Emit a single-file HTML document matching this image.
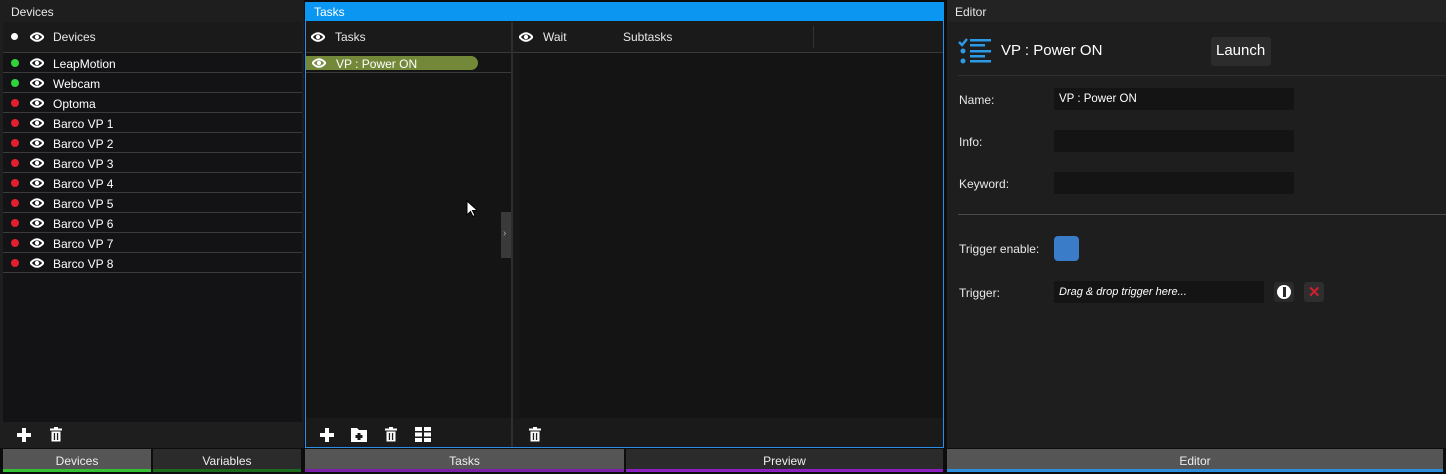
<!DOCTYPE html>
<html><head><meta charset="utf-8"><style>
*{margin:0;padding:0;box-sizing:border-box}
body{width:1446px;height:474px;background:#0d0d0d;font-family:"Liberation Sans",sans-serif;font-size:12px;color:#e8e8e8;position:relative;overflow:hidden}
.a{position:absolute}
.t{position:absolute;white-space:nowrap}
.row{position:absolute;left:3px;width:299px;height:20px;border-bottom:1px solid #3a3a3a}
.dot{position:absolute;left:8px;top:6px;width:8px;height:8px;border-radius:50%}
.eye{position:absolute}
.tab{position:absolute;top:449px;height:23px;text-align:center;line-height:25px;font-size:12px;color:#eee}
</style></head><body>
<svg width="0" height="0" style="position:absolute"><defs>
<g id="eye"><path d="M0.5 5 Q7 -2.5 13.5 5 Q7 12.5 0.5 5Z" fill="none" stroke="#fff" stroke-width="2"/><circle cx="7" cy="5" r="2.2" fill="#fff"/></g>
<g id="trash"><rect x="0" y="1.5" width="12" height="2" fill="#fff"/><rect x="4" y="0" width="4" height="2" fill="#fff"/><path d="M1.5 4.5h9v10h-9z" fill="#fff"/><rect x="3.8" y="6" width="1.3" height="7" fill="#1e1e1e"/><rect x="6.9" y="6" width="1.3" height="7" fill="#1e1e1e"/></g>
<g id="plus"><rect x="0" y="5" width="14" height="4" fill="#fff"/><rect x="5" y="0" width="4" height="14" fill="#fff"/></g>
</defs></svg>

<!-- Devices panel -->
<div class="a" style="left:0;top:0;width:304px;height:448px;background:#1e1e1e"></div>
<div class="t" style="left:11px;top:5px;font-size:12px">Devices</div>
<div class="a" style="left:3px;top:22px;width:299px;height:31px;background:#1a1a1a;border-bottom:1px solid #3a3a3a"></div>
<div class="a" style="left:11px;top:33px;width:7px;height:7px;border-radius:50%;background:#fff"></div>
<svg class="a" style="left:30px;top:32px" width="14" height="10"><use href="#eye"/></svg>
<div class="t" style="left:53px;top:30px">Devices</div>
<div class="a" style="left:3px;top:53px;width:299px;height:369px;background:#131315"></div>
<div id="rows"></div>
<div class="a" style="left:3px;top:422px;width:299px;height:25px;background:#1e1e1e"></div>
<svg class="a" style="left:17px;top:428px" width="14" height="14"><use href="#plus"/></svg>
<svg class="a" style="left:50px;top:427px" width="12" height="15"><use href="#trash"/></svg>
<div class="tab" style="left:3px;width:148px;background:#555;border-bottom:3px solid #33c033">Devices</div>
<div class="tab" style="left:153px;width:148px;background:#2b2b2b;border-bottom:3px solid #1c6b1c">Variables</div>

<!-- Tasks panel -->
<div class="a" style="left:305px;top:2px;width:639px;height:446px;background:#1a1a1a;border:1px solid #2a8ee6"></div>
<div class="a" style="left:305px;top:2px;width:639px;height:19px;background:#0b96f2"></div>
<div class="t" style="left:314px;top:5px;color:#fff">Tasks</div>
<div class="a" style="left:306px;top:22px;width:205px;height:31px;background:#1a1a1a;border-bottom:1px solid #3a3a3a"></div>
<svg class="a" style="left:311px;top:32px" width="14" height="10"><use href="#eye"/></svg>
<div class="t" style="left:335px;top:30px">Tasks</div>
<div class="a" style="left:306px;top:53px;width:205px;height:365px;background:#141414"></div>
<div class="a" style="left:306px;top:56px;width:172px;height:14px;background:#74883a;border-radius:0 7px 7px 0"></div>
<div class="a" style="left:306px;top:72px;width:205px;height:1px;background:#3a3a3a"></div>
<svg class="a" style="left:312px;top:58px" width="14" height="10"><use href="#eye"/></svg>
<div class="t" style="left:336px;top:57px;color:#fff">VP : Power ON</div>
<div class="a" style="left:511px;top:22px;width:2px;height:425px;background:#2e2e2e"></div>
<div class="a" style="left:513px;top:22px;width:430px;height:31px;background:#1a1a1a;border-bottom:1px solid #3a3a3a"></div>
<div class="a" style="left:813px;top:26px;width:1px;height:22px;background:#333"></div>
<svg class="a" style="left:519px;top:32px" width="14" height="10"><use href="#eye"/></svg>
<div class="t" style="left:543px;top:30px">Wait</div>
<div class="t" style="left:623px;top:30px">Subtasks</div>
<div class="a" style="left:513px;top:53px;width:430px;height:365px;background:#141414"></div>
<div class="a" style="left:513px;top:53px;width:6px;height:365px;background:#171717"></div>
<div class="a" style="left:501px;top:212px;width:10px;height:46px;background:#3a3a3a"></div>
<div class="t" style="left:503px;top:228px;font-size:10px;color:#aaa">›</div>
<svg class="a" style="left:466px;top:200px" width="11" height="18"><path d="M1 1v14l3.5-3.5 2.5 5 2-1-2.5-5h5z" fill="#fff" stroke="#000" stroke-width="1"/></svg>
<svg class="a" style="left:320px;top:428px" width="14" height="14"><use href="#plus"/></svg>
<svg class="a" style="left:351px;top:427px" width="16" height="15"><path d="M0 1h6l2 2h8v12H0z" fill="#fff"/><rect x="6.5" y="6" width="3" height="7" fill="#1a1a1a"/><rect x="4.5" y="8" width="7" height="3" fill="#1a1a1a"/></svg>
<svg class="a" style="left:385px;top:427px" width="12" height="15"><use href="#trash"/></svg>
<svg class="a" style="left:415px;top:427px" width="16" height="15"><rect x="0" y="0" width="7" height="4" fill="#fff"/><rect x="9" y="0" width="7" height="4" fill="#fff"/><rect x="0" y="5.5" width="7" height="4" fill="#fff"/><rect x="9" y="5.5" width="7" height="4" fill="#fff"/><rect x="0" y="11" width="7" height="4" fill="#fff"/><rect x="9" y="11" width="7" height="4" fill="#fff"/></svg>
<svg class="a" style="left:529px;top:427px" width="12" height="15"><use href="#trash"/></svg>
<div class="tab" style="left:305px;width:319px;background:#555;border-bottom:3px solid #7a1fa8">Tasks</div>
<div class="tab" style="left:626px;width:317px;background:#2b2b2b;border-bottom:3px solid #8b1fc0">Preview</div>

<!-- Editor -->
<div class="a" style="left:947px;top:0;width:499px;height:448px;background:#1e1e1e"></div>
<div class="a" style="left:947px;top:0;width:499px;height:22px;background:#232323"></div>
<div class="t" style="left:955px;top:5px">Editor</div>
<svg class="a" style="left:958px;top:36px" width="34" height="30"><path d="M1 6l3 3 5-6" fill="none" stroke="#2b9be8" stroke-width="2.5"/><rect x="12" y="3" width="21" height="2.5" fill="#2b9be8"/><rect x="12" y="8" width="15" height="2.5" fill="#2b9be8"/><circle cx="5" cy="15" r="2.5" fill="#2b9be8"/><rect x="12" y="14" width="21" height="2.5" fill="#2b9be8"/><rect x="12" y="19" width="15" height="2.5" fill="#2b9be8"/><circle cx="5" cy="25" r="2.5" fill="#2b9be8"/><rect x="12" y="24" width="21" height="2.5" fill="#2b9be8"/></svg>
<div class="t" style="left:1001px;top:42px;font-size:15px;color:#fff">VP : Power ON</div>
<div class="a" style="left:1211px;top:37px;width:60px;height:29px;background:#2c2c2c;border-radius:3px"></div>
<div class="t" style="left:1216px;top:42px;font-size:15px;color:#fff">Launch</div>
<div class="a" style="left:958px;top:75px;width:488px;height:1px;background:#303030"></div>
<div class="t" style="left:959px;top:93px">Name:</div>
<div class="a" style="left:1054px;top:88px;width:240px;height:22px;background:#141414"></div>
<div class="t" style="left:1059px;top:93px;color:#fff;font-size:11.5px">VP : Power ON</div>
<div class="t" style="left:959px;top:135px">Info:</div>
<div class="a" style="left:1054px;top:130px;width:240px;height:22px;background:#141414"></div>
<div class="t" style="left:959px;top:177px">Keyword:</div>
<div class="a" style="left:1054px;top:172px;width:240px;height:22px;background:#141414"></div>
<div class="a" style="left:958px;top:214px;width:488px;height:1px;background:#4a4a4a"></div>
<div class="t" style="left:959px;top:242px">Trigger enable:</div>
<div class="a" style="left:1054px;top:236px;width:25px;height:25px;background:#3a7cc8;border-radius:4px"></div>
<div class="t" style="left:959px;top:286px">Trigger:</div>
<div class="a" style="left:1054px;top:281px;width:210px;height:22px;background:#141414"></div>
<div class="t" style="left:1059px;top:286px;font-style:italic;font-size:11px;color:#fff">Drag &amp; drop trigger here...</div>
<div class="a" style="left:1274px;top:282px;width:20px;height:20px;background:#2a2a2a;border-radius:3px"></div>
<div class="a" style="left:1277px;top:285px;width:14px;height:14px;border-radius:50%;background:#fff"></div>
<div class="a" style="left:1283px;top:287px;width:2.5px;height:10px;background:#2a2a2a"></div>
<div class="a" style="left:1304px;top:282px;width:20px;height:20px;background:#2e2e2e;border-radius:3px"></div>
<div class="t" style="left:1308px;top:283px;color:#d02030;font-size:15px;font-weight:bold">✕</div>
<div class="tab" style="left:947px;width:496px;background:#555;border-bottom:3px solid #2b8fdc">Editor</div>

<script>
var d=[["LeapMotion","#2fd43a"],["Webcam","#2fd43a"],["Optoma","#e21f2f"]];
for(var i=1;i<=8;i++)d.push(["Barco VP "+i,"#e21f2f"]);
var h="";
d.forEach(function(r,i){var y=53+i*20;
h+='<div class="row" style="top:'+y+'px"><div class="dot" style="background:'+r[1]+'"></div>'+
'<svg class="eye" style="left:27px;top:5px" width="14" height="10"><use href="#eye"/></svg>'+
'<div class="t" style="left:50px;top:4px;color:#fff">'+r[0]+'</div></div>';});
document.getElementById("rows").outerHTML=h;
</script>
</body></html>
